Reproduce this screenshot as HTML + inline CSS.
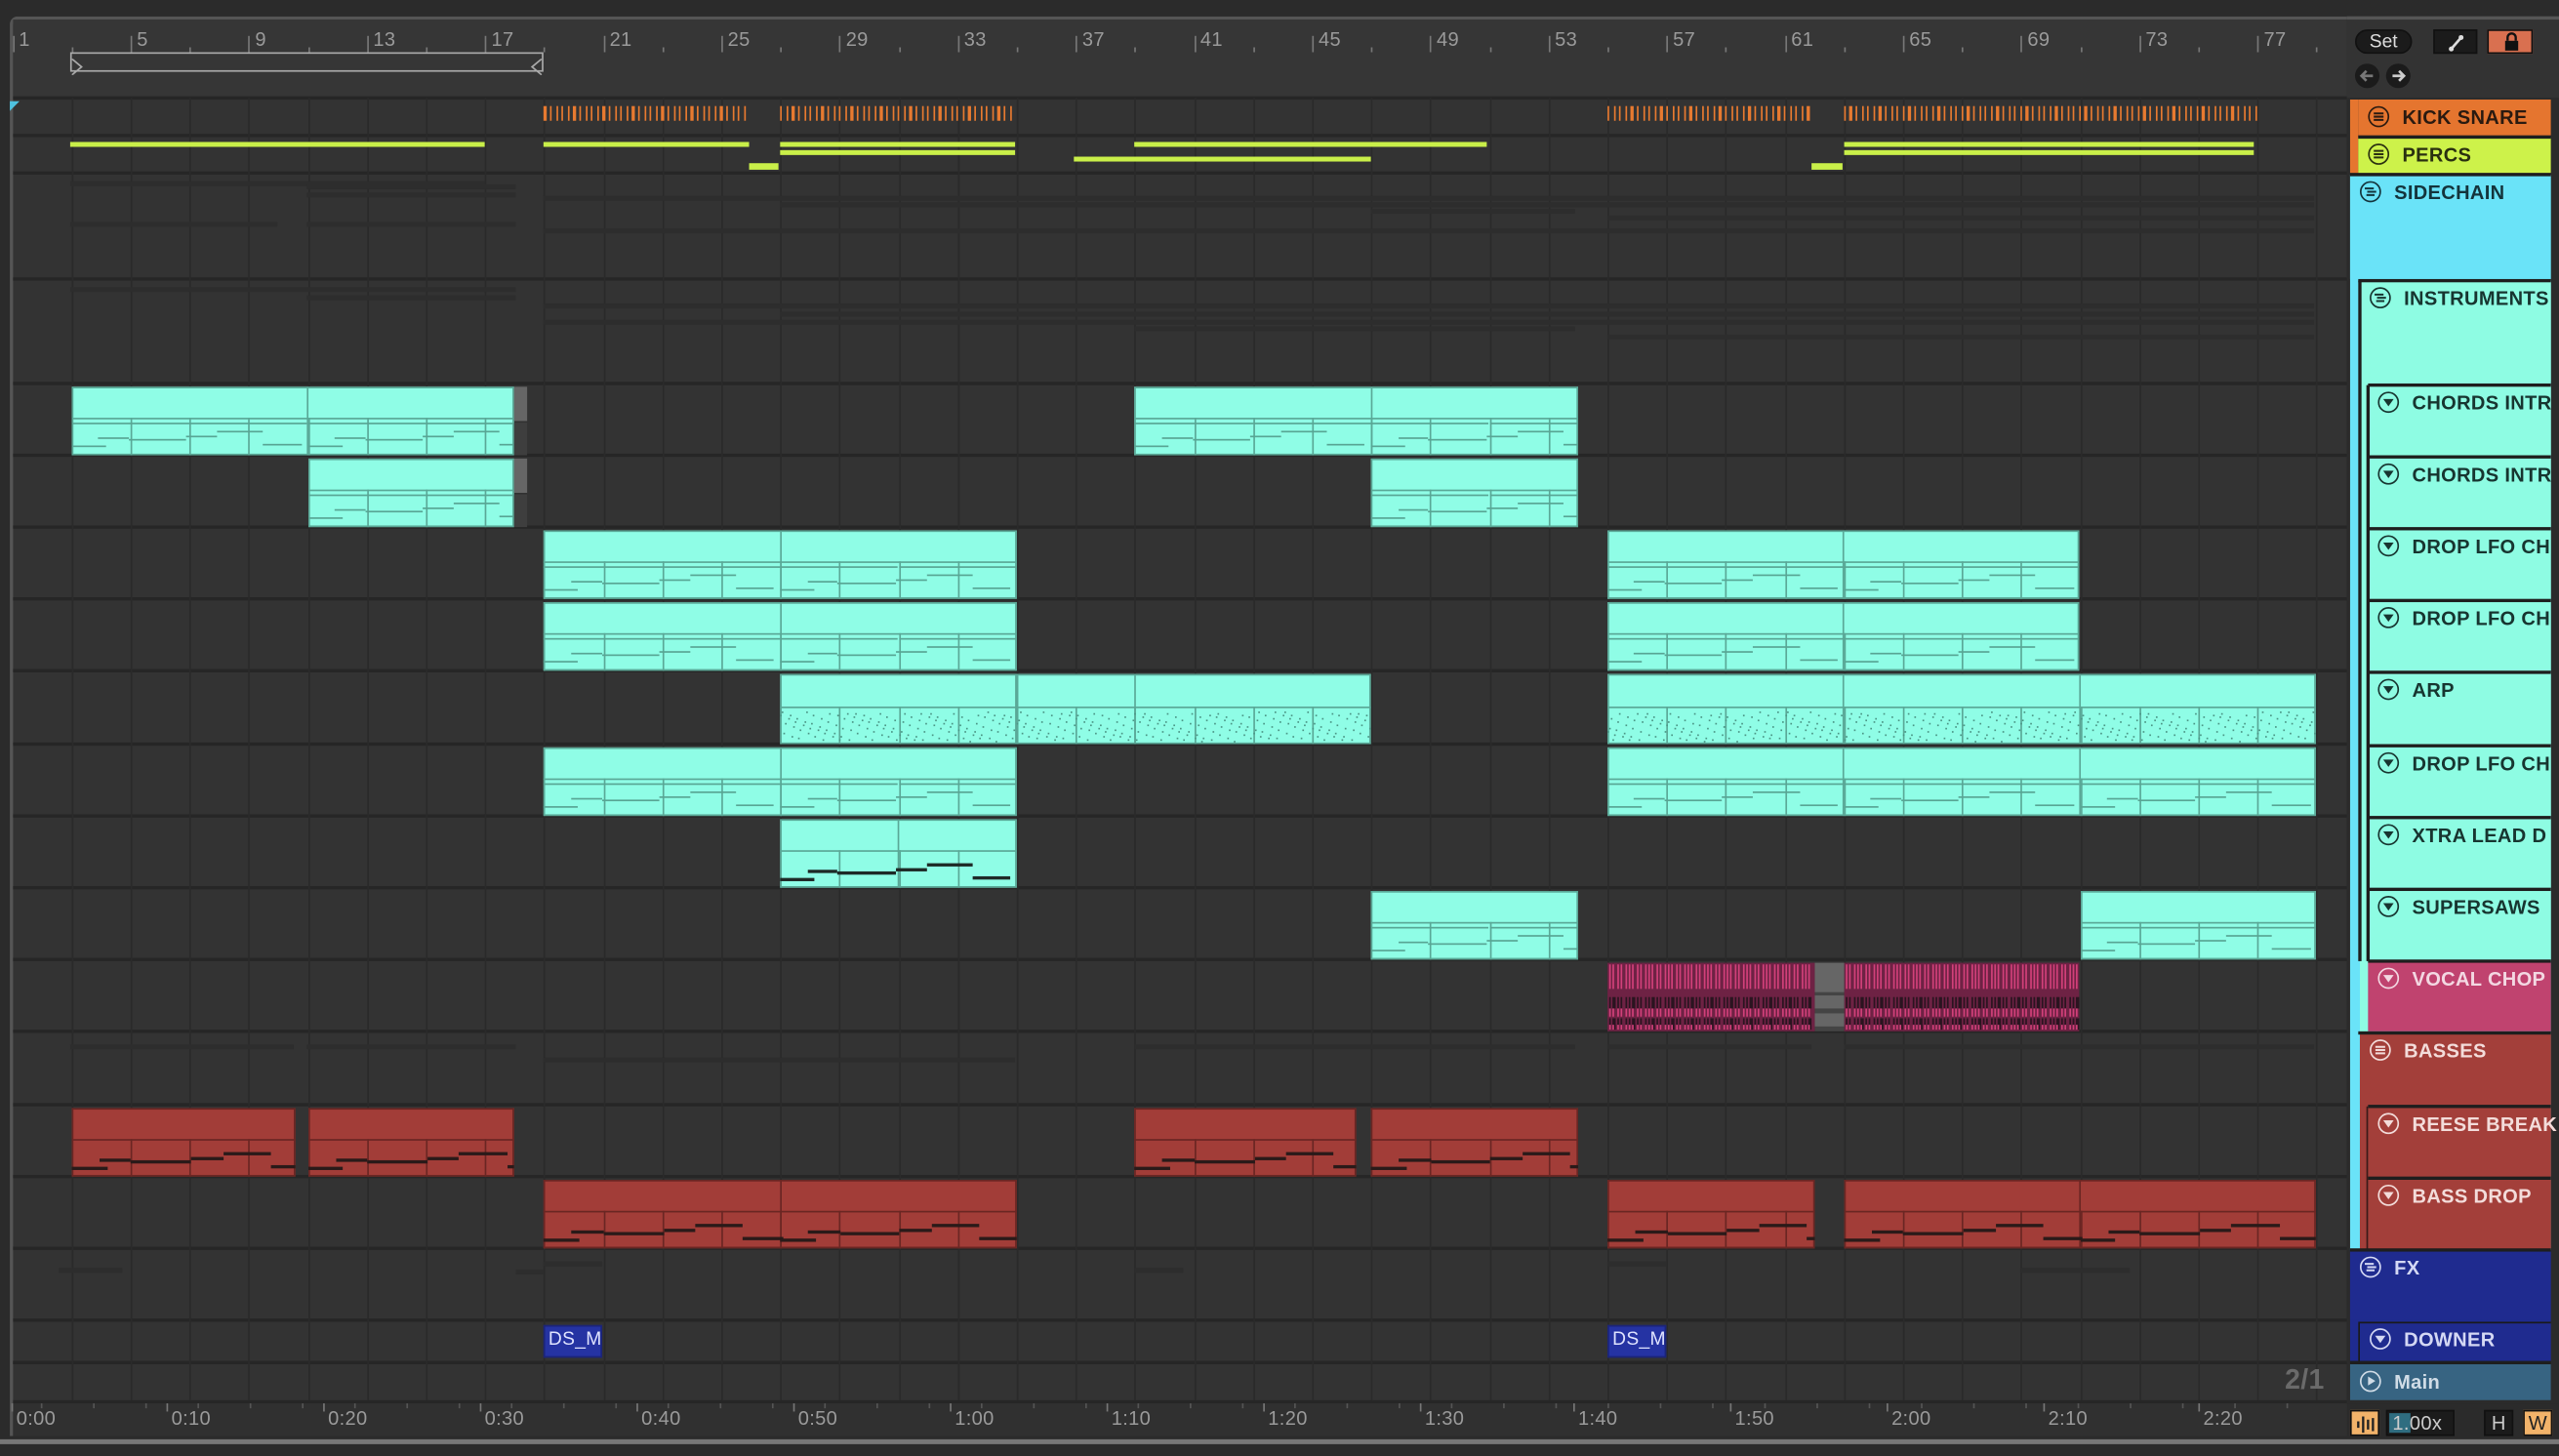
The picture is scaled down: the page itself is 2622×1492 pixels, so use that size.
<!DOCTYPE html>
<html><head><meta charset="utf-8">
<style>
html,body{margin:0;padding:0;background:#2b2b2b;width:2622px;height:1492px;overflow:hidden}
#s{position:absolute;left:0;top:0;width:1568px;height:892px;transform:scale(1.67219);transform-origin:0 0;font-family:"Liberation Sans",sans-serif;background:#2b2b2b}
.a{position:absolute;box-sizing:border-box}
.t{position:absolute;font-weight:bold;font-size:12px;white-space:nowrap;letter-spacing:0.2px}
.ic{position:absolute;width:13px;height:13px;border:1.3px solid;border-radius:50%;box-sizing:border-box}
</style></head><body><div id="s"></div>
<script>
const S=document.getElementById('s');
function d(x,y,w,h,st,txt,cls){const e=document.createElement('div');e.className=cls||'a';e.style.cssText=`left:${x}px;top:${y}px;width:${w}px;height:${h}px;`+(st||'');if(txt)e.textContent=txt;S.appendChild(e);return e;}
const X=b=>7.5+(b-1)*18.1;
d(6,10,1432,870,'background:#333;border-radius:5px 0 0 0;border-top:2px solid #555;border-left:2px solid #555;');
d(1438,10,130,50,'background:#333;border-top:2px solid #555;');
d(8,12,1430,48,'background:#363636');
for(let b=1;b<=79;b+=4){d(X(b),22,1,10,'background:#777');d(X(b)+4,17,30,14,'color:#9a9a9a;font-size:12px;font-family:Liberation Sans Narrow,Liberation Sans,sans-serif','' + b,'t').style.fontWeight='normal';}
for(let b=3;b<=79;b+=4){d(X(b),29,1,3,'background:#777');}
d(43,32,290,12,'border:1px solid #aaa;');
d(44,33,8,10,'','','a').innerHTML='<svg width="8" height="10"><path d="M0 0 L6 5 L0 10" stroke="#aaa" fill="none"/></svg>';
d(324,33,8,10,'','','a').innerHTML='<svg width="8" height="10"><path d="M8 0 L2 5 L8 10" stroke="#aaa" fill="none"/></svg>';
d(6,55,6,6,'','','a').innerHTML='<svg width="6" height="6"><path d="M0 0 L6 0 L0 6Z" fill="#4ec2e0"/></svg>';
const R=[[61,23],[84,23],[107,65],[172,64],[236,44],[280,44],[324,44],[368,44],[412,45],[457,44],[501,44],[545,44],[589,44],[633,45],[678,44],[722,44],[766,44],[810,25],[836,23]];
R.forEach(([y,h])=>{d(8,y-2,1430,2,'background:#262626');});
d(8,834,1430,2,'background:#262626');d(8,858,1430,2,'background:#262626');
for(let b=3;b<=79;b+=2)d(X(b),60,1,798,'background:#2a2a2a');
[[43,297,111],[188,316,113],[188,316,118],[43,170,136],[188,316,136],[333,1418,120],[478,1418,124],[840,965,128],[985,1418,132],[333,1418,140],[43,316,176],[188,316,181],[333,1418,186],[478,1418,191],[333,1418,196],[695,965,200],[985,1418,205],[43,180,640],[188,316,640],[333,622,648],[695,965,640],[985,1110,640],[1130,1418,640],[36,75,777],[333,369,773],[985,1021,773],[1238,1305,777],[695,725,777],[316,333,778]].forEach(([a,b,y])=>d(a,y,b-a,3,'background:#2d2d2d'));
function clip(b1,b2,row,col,splits,kind){const[y,h]=R[row];const x1=X(b1),x2=X(b2);const top=y+1,hh=h-2;
 const dk=col=='c'?'#5aa897':'#6a2623', bg=col=='c'?'#8ffde6':'#a23d38';
 d(x1,top,x2-x1,hh,`background:${bg};border:1px solid ${dk};`);
 const hy=top+Math.round(hh*0.46);
 d(x1,hy,x2-x1,1.2,`background:${dk}`);
 for(let b=b1+2;b<b2;b+=2)d(X(b),hy,1,top+hh-hy,`background:${dk}`);
 splits.forEach(s=>d(X(s)-0.5,top,1.2,hh,`background:${dk}`));
 const nc=col=='c'?(kind=='x'?'#1e2a27':'#58a594'):'#2a1a19';
 const th=(kind=='x'||col=='r')?2.2:1.2;
 if(kind=='arp'){for(let b=b1;b<b2;b+=0.25){for(let k=0;k<4;k++){const yy=hy+3+((b*7+k*5)%17)/17*(top+hh-hy-5);d(X(b)+((k*3)%4),yy,1,1,'background:#4b9585');}}}
 else{const segs=[[0,0.9,.85],[0.7,1.5,.55],[1.5,3,.62],[3,3.8,.5],[3.8,5,.35],[5,6,.75]];
  const m=col=='r'?1.35:1.3;
  for(let b=b1;b<b2;b+=8)segs.forEach(([s,e,f])=>{if(b+s*m<b2){const ee=Math.min(b+e*m,b2);d(X(b+s*m),hy+2+f*(top+hh-hy-5),X(ee)-X(b+s*m),th,`background:${nc}`);}});
  if(col=='c'&&kind!='x')for(let b=b1;b<b2;b+=4)d(X(b),hy+3,X(Math.min(b+4,b2))-X(b),1,`background:${nc}`);}
}
clip(3,18,4,'c',[11]);clip(39,54,4,'c',[47]);d(315,237,8,21,'background:#666');d(315,259,8,20,'background:#3e3e3e');
clip(11,18,5,'c',[]);clip(47,54,5,'c',[]);d(315,281,8,21,'background:#666');d(315,303,8,20,'background:#3e3e3e');
clip(19,35,6,'c',[27]);clip(55,71,6,'c',[63]);
clip(19,35,7,'c',[27]);clip(55,71,7,'c',[63]);
clip(27,47,8,'c',[35,39],'arp');clip(55,79,8,'c',[63,71],'arp');
clip(19,35,9,'c',[27]);clip(55,79,9,'c',[63,71]);
clip(27,35,10,'c',[31],'x');
clip(47,54,11,'c',[]);clip(71,79,11,'c',[]);
clip(3,10.6,14,'r',[]);clip(11,18,14,'r',[]);clip(39,46.5,14,'r',[]);clip(47,54,14,'r',[]);
clip(19,35,15,'r',[27]);clip(55,62,15,'r',[]);clip(63,79,15,'r',[71]);
[[55,62],[63,71]].forEach(([a,b])=>{const x1=X(a),x2=X(b);d(x1,590,x2-x1,42,'background:#6e2244');
 for(let x=x1+1;x<x2-1;x+=2.4){d(x,591,1.2,15,'background:#d2407a');d(x,611,1.3,7,'background:#2a1420');d(x,624,1.3,7,'background:#2a1420');d(x,618,1.2,5,'background:#d2407a');d(x,628,1.2,3,'background:#d2407a');}});
d(X(62),590,X(63)-X(62),42,'background:#444');d(X(62),590,X(63)-X(62),18,'background:#666');d(X(62),610,X(63)-X(62),8,'background:#666');d(X(62),621,X(63)-X(62),8,'background:#666');
[[19,26],[27,35],[55,62],[63,77]].forEach(([a,b])=>{for(let x=X(a);x<X(b)-1;x+=3.6){d(x,65,1.3,9,'background:#e87a30');}});
[[43,297,87],[333,459,87],[478,622,87],[478,622,92],[695,911,87],[1130,1381,87],[1130,1381,92],[658,840,96],[459,477,100],[1110,1129,100]].forEach(([a,b,y])=>d(a,y,b-a,y==100?4:3,'background:#c9ef49'));
[333,985].forEach(x=>{d(x,812,36,20,'background:#2533a3;border:1px solid #1b2478;');d(x+3,815,34,14,'color:#dfe3ff;font-size:11.5px;font-weight:normal','DS_M','t');});
d(1400,836,40,20,'color:#6a6a6a;font-size:17px','2/1','t');
d(8,860,1430,20,'background:#303030');
['0:00','0:10','0:20','0:30','0:40','0:50','1:00','1:10','1:20','1:30','1:40','1:50','2:00','2:10','2:20'].forEach((t,i)=>{const x=[10,105,201,297,393,489,585,681,777,873,967,1063,1159,1255,1350][i];d(x-3,860,1,5,'background:#777');d(x,862,40,14,'color:#9a9a9a;font-size:12px;font-weight:normal',t,'t');});
for(let x=25;x<1430;x+=32)d(x,860,1,3,'background:#555');
d(0,882,1568,3,'background:#777');
d(1438,60,130,800,'background:#2b2b2b');
d(1443,18,35,15,'background:#1b1b1b;border:1px solid #111;border-radius:8px;color:#ddd;font-size:11.5px;font-weight:normal;text-align:center;line-height:14px','Set','a');
d(1491,18,27,15,'background:#1b1b1b;border:1px solid #111;','','a').innerHTML='<svg width="27" height="15"><path d="M10 11 L16 4" stroke="#ddd" stroke-width="1.6"/><circle cx="10" cy="11" r="1.5" fill="#ddd"/><circle cx="16" cy="4" r="1.5" fill="#ddd"/></svg>';
d(1524,18,28,15,'background:#d97050;border:1px solid #111;','','a').innerHTML='<svg width="28" height="15"><rect x="10" y="6" width="8" height="6" fill="#111"/><path d="M11.5 6 V4 a2.5 2.5 0 0 1 5 0 V6" stroke="#111" fill="none" stroke-width="1.4"/></svg>';
[1443,1462].forEach((x,i)=>d(x,39,15,15,'background:#1b1b1b;border-radius:50%;','','a').innerHTML=`<svg width="15" height="15"><path d="${i?'M4 7.5 H11 M8 4.5 L11 7.5 L8 10.5':'M11 7.5 H4 M7 4.5 L4 7.5 L7 10.5'}" stroke="${i?'#ccc':'#777'}" stroke-width="1.6" fill="none"/></svg>`);
function hdr(x,y,w,h,bg,txt,tc,ic){d(x,y,w,h,'background:'+bg);const ii=d(x+6,y+4,13,13,'border-color:'+tc,'', 'ic');
 ii.innerHTML= ic=='g'?`<svg width="11" height="11" style="position:absolute;left:0;top:0"><path d="M2.5 3.5H8.5M2.5 5.5H8.5M2.5 7.5H8.5" stroke="${tc}" stroke-width="1.2"/></svg>`: ic=='G'?`<svg width="11" height="11" style="position:absolute;left:0;top:0"><path d="M2 3.5H7.5M3.5 5.5H9M3 7.5H8" stroke="${tc}" stroke-width="1.2"/></svg>`: ic=='p'?`<svg width="11" height="11" style="position:absolute;left:0;top:0"><path d="M4 2.5 L8.5 5.3 L4 8 Z" fill="${tc}"/></svg>`:`<svg width="11" height="11" style="position:absolute;left:0;top:0"><path d="M2.3 3.5 H8.7 L5.5 8 Z" fill="${tc}"/></svg>`;
 d(x+27,y+4,120,14,'color:'+tc,txt,'t');}
d(1440,61,5,45,'background:#e5752f');
hdr(1445,61,118,22,'#e5752f','KICK SNARE','#2a1a10','g');
hdr(1445,84,118,22,'#cdf24a','PERCS','#2a3010','g');
d(1440,107,123,659,'background:#6ae3f8');
hdr(1440,107,123,64,'#6ae3f8','SIDECHAIN','#14343c','G');
d(1446,172,117,417,'background:#8efce3');
hdr(1446,172,117,62,'#8efce3','INSTRUMENTS','#173530','G');
const ins=[[236,'CHORDS INTR'],[280,'CHORDS INTR'],[324,'DROP LFO CH'],[368,'DROP LFO CH'],[412,'ARP'],[457,'DROP LFO CH'],[501,'XTRA LEAD D'],[545,'SUPERSAWS']];
ins.forEach(([y,t])=>hdr(1451,y,112,y==412?44:43,'#8efce3',t,'#173530','d'));
d(1446,589,5,44,'background:#8efce3');
hdr(1451,589,112,43,'#c0436f','VOCAL CHOP','#f3d8e2','d');
d(1446,633,117,133,'background:#a33f3a');
hdr(1446,633,117,44,'#a33f3a','BASSES','#f3dcda','g');
hdr(1451,678,112,43,'#a33f3a','REESE BREAK','#f3dcda','d');
hdr(1451,722,112,43,'#a33f3a','BASS DROP','#f3dcda','d');
d(1450,678,1,88,'background:#3a1a18');
d(1440,766,123,68,'background:#1f2b8f');
hdr(1440,766,123,43,'#1f2b8f','FX','#d4d8f4','G');
hdr(1446,810,117,24,'#1f2b8f','DOWNER','#d4d8f4','d');d(1445,810,1,24,'background:#1a1a1a');d(1446,810,117,1,'background:#1a1a1a');
hdr(1440,836,123,22,'#376482','Main','#d0dce6','p');
[236,280,324,368,412,457,501,545,589].forEach(y=>d(1451,y-1,112,1.5,'background:#1e1e1e'));
d(1450,236,1.5,353,'background:#1e1e1e');
d(1445,171,118,1.5,'background:#1e1e1e');d(1445,172,1.5,417,'background:#1e1e1e');
[678,722].forEach(y=>d(1451,y-1,112,1.5,'background:#1e1e1e'));
d(1440,106,123,1.5,'background:#1e1e1e');d(1445,83,118,1.5,'background:#1e1e1e');d(1440,765,123,1.5,'background:#1e1e1e');d(1440,834,123,2,'background:#1e1e1e');d(1445,632,118,1.5,'background:#1e1e1e');
d(1440,864,18,16,'background:#f2b36a;border:1px solid #111;','','a').innerHTML='<svg width="18" height="16"><path d="M4 6v4M7 3v10M10 5v6M13 4v8" stroke="#222" stroke-width="1.4"/></svg>';
d(1462,864,42,16,'background:#1b1b1b;border:1px solid #111;','','a');d(1464,866,13,12,'background:#2f6d80');
d(1466,864,40,16,'color:#ccc;font-size:12px;font-weight:normal;line-height:16px','1.00x','t');
d(1522,864,18,16,'background:#1b1b1b;border:1px solid #111;color:#ccc;font-size:12px;text-align:center;line-height:15px','H','a');
d(1546,864,18,16,'background:#f2b36a;border:1px solid #111;color:#222;font-size:12px;text-align:center;line-height:15px','W','a');
</script></body></html>
